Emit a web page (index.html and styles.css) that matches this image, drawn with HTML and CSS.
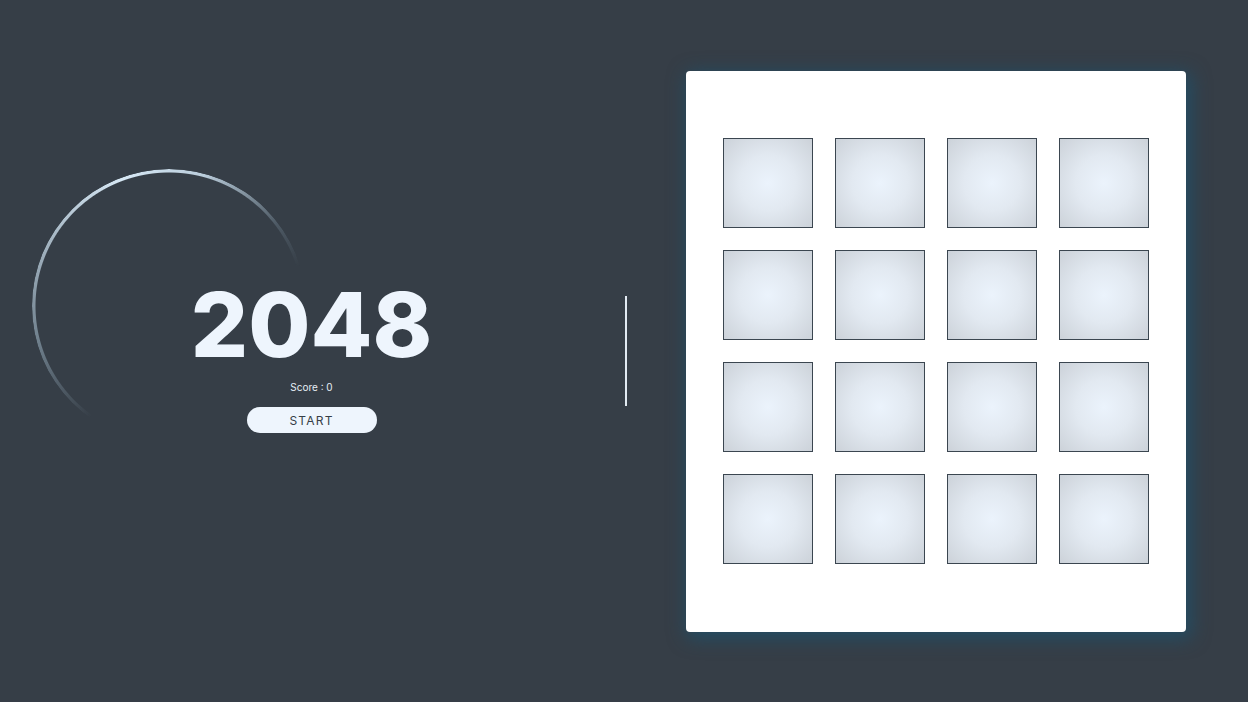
FILE: index.html
```html
<!DOCTYPE html>
<html>
<head>
<meta charset="utf-8">
<title>2048</title>
<link rel="stylesheet" href="styles.css">
</head>
<body>
<main class="page">
  <section class="intro">
    <div class="ring"></div>
    <h1 class="title">2048</h1>
    <p class="score">Score : 0</p>
    <button class="start">START</button>
  </section>
  <div class="divider"></div>
  <section class="play">
    <div class="board">
      <div class="grid">
        <div class="tile"></div><div class="tile"></div><div class="tile"></div><div class="tile"></div>
        <div class="tile"></div><div class="tile"></div><div class="tile"></div><div class="tile"></div>
        <div class="tile"></div><div class="tile"></div><div class="tile"></div><div class="tile"></div>
        <div class="tile"></div><div class="tile"></div><div class="tile"></div><div class="tile"></div>
      </div>
    </div>
  </section>
</main>
</body>
</html>
```
FILE: styles.css
```css
* { box-sizing: border-box; }
html, body { margin: 0; padding: 0; }
body {
  background: #363e47;
  font-family: Inter, "Liberation Sans", sans-serif;
  width: 1248px;
  height: 702px;
  overflow: hidden;
}
.page {
  display: flex;
  align-items: center;
  height: 702px;
}
.intro {
  flex: 0 0 623px;
  position: relative;
  display: flex;
  flex-direction: column;
  align-items: center;
  height: 702px;
  padding-top: 280px;
}
.ring {
  position: absolute;
  left: 32px;
  top: 169px;
  width: 274px;
  height: 274px;
  border-radius: 50%;
  background: conic-gradient(from 215deg,
    rgba(220,234,245,0) 0deg,
    rgba(170,195,212,0.5) 40deg,
    rgba(215,232,245,1) 125deg,
    rgba(200,220,235,0.9) 160deg,
    rgba(120,140,155,0.35) 198deg,
    rgba(120,140,155,0) 218deg,
    rgba(0,0,0,0) 360deg);
  -webkit-mask: radial-gradient(circle, transparent 133px, #000 134px);
  mask: radial-gradient(circle, transparent 133px, #000 134px);
}
.title {
  margin: 0;
  font-size: 90px;
  line-height: 90px;
  font-weight: 800;
  color: #eef5fd;
  position: relative;
}
.score {
  margin: 10px 0 0;
  font-size: 10px;
  line-height: 14px;
  color: #e6eef6;
}
.start {
  margin-top: 13px;
  width: 130px;
  height: 26px;
  border: none;
  border-radius: 13px;
  background: #eef5fd;
  color: #363e47;
  font-family: Inter, "Liberation Sans", sans-serif;
  font-size: 12px;
  letter-spacing: 1.2px;
  padding: 0;
}
.divider {
  width: 2px;
  height: 110px;
  margin-left: 2px;
  background: #e2eaf2;
}
.play {
  flex: 1;
  display: flex;
  justify-content: center;
  align-items: center;
  padding-right: 3px;
}
.board {
  width: 500px;
  height: 561px;
  background: #ffffff;
  border-radius: 4px;
  box-shadow: 3px 4px 18px 3px rgba(30, 82, 108, 0.75);
  display: flex;
  align-items: center;
  justify-content: center;
}
.grid {
  display: grid;
  grid-template-columns: repeat(4, 90px);
  grid-auto-rows: 90px;
  gap: 22px;
}
.tile {
  border: 1px solid #3b4650;
  background: radial-gradient(circle at 50% 50%, #ebf3fc 0%, #e2e9f1 45%, #ccd2d9 100%);
}
```
